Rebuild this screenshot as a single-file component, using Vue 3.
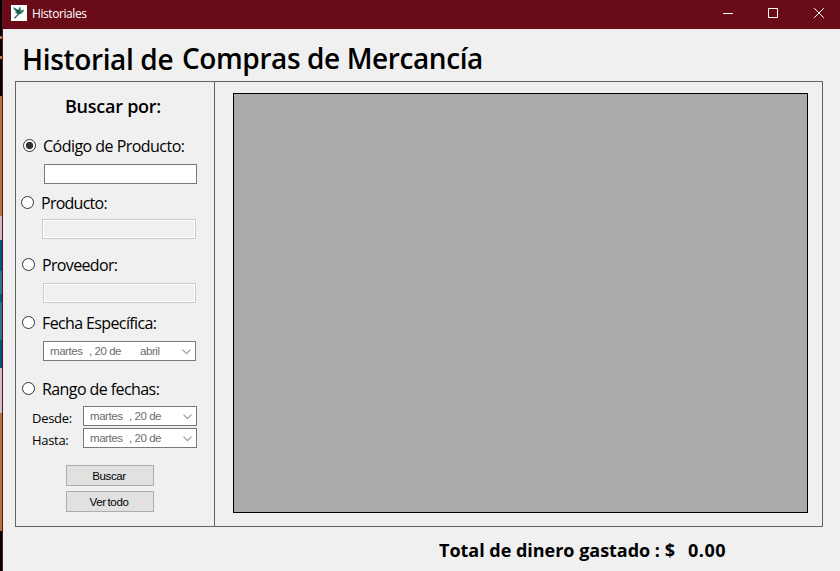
<script setup>
import { ref } from 'vue'

const mode = ref('codigo')
const code = ref('')
</script>

<template>
  <div class="screen">
    <div class="desktop">
      <i class="d-top"></i><i class="d-orange"></i><i class="d-grey"></i><i class="d-blue"></i><i class="d-teal"></i><i class="d-gap"></i><i class="d-teal2"></i><i class="d-blue2"></i><i class="d-grey2"></i><i class="d-orange2"></i>
    </div>
    <main class="window">
      <header class="titlebar">
        <svg class="app-icon" width="16" height="16" viewBox="0 0 16 16">
          <rect width="16" height="16" fill="#fff" />
          <path d="M2 2.2 4.2 3 7 5 8 3.6 8.8 1.2 9.6 3 9.6 5.4 13.4 4.6 11.8 7.4 9.6 9 7 9.8 6 8.6 3.4 7.8 5.6 7.2 3.2 4.4Z" fill="#23705f" />
          <path d="M5 4.4 8 6 8.8 8.6 6.4 7.6Z" fill="#134d45" />
          <path d="M9.4 7.4 12.8 5.4" stroke="#62a04a" fill="none" />
          <path d="M7.4 9.2 3.4 13.2" stroke="#2c6b4d" stroke-width="1.3" fill="none" />
        </svg>
        <span class="caption">Historiales</span>
        <div class="controls">
          <svg width="46" height="29" viewBox="0 0 46 29"><path d="M18 13.5h10" /></svg>
          <svg width="46" height="29" viewBox="0 0 46 29"><path d="M17.5 8.5h9v9h-9z" /></svg>
          <svg width="46" height="29" viewBox="0 0 46 29"><path d="m17.2 8.2 9.6 9.6m0-9.6-9.6 9.6" /></svg>
        </div>
      </header>

      <h1 class="title"><span class="t1">Historial de</span><span class="t2">Compras de Mercancía</span></h1>

      <section class="panel">
        <form class="sidebar" @submit.prevent>
          <h2><span>Buscar por:</span></h2>

          <label class="option o1"><input v-model="mode" type="radio" value="codigo"><span class="l1">Código de Producto:</span></label>
          <input v-model="code" class="box b1" type="text">

          <label class="option o2"><input v-model="mode" type="radio" value="producto"><span class="l2">Producto:</span></label>
          <input class="box b2" type="text" disabled>

          <label class="option o3"><input v-model="mode" type="radio" value="proveedor"><span class="l3">Proveedor:</span></label>
          <input class="box b3" type="text" disabled>

          <label class="option o4"><input v-model="mode" type="radio" value="fecha"><span class="l4">Fecha Específica:</span></label>
          <div class="date single">
            <span class="day">martes</span><span class="num">, 20 de</span><span class="month">abril</span>
            <svg width="9" height="6" viewBox="0 0 9 6"><path d="m.5.7 4 4 4-4" /></svg>
          </div>

          <label class="option o5"><input v-model="mode" type="radio" value="rango"><span class="l5">Rango de fechas:</span></label>
          <div class="range">
            <span class="from">Desde:</span>
            <div class="date">
              <span class="day">martes</span><span class="num">, 20 de</span>
              <svg width="9" height="6" viewBox="0 0 9 6"><path d="m.5.7 4 4 4-4" /></svg>
            </div>
          </div>
          <div class="range">
            <span class="to">Hasta:</span>
            <div class="date">
              <span class="day">martes</span><span class="num">, 20 de</span>
              <svg width="9" height="6" viewBox="0 0 9 6"><path d="m.5.7 4 4 4-4" /></svg>
            </div>
          </div>

          <div class="actions">
            <button type="submit"><span class="search">Buscar</span></button>
            <button type="button"><span class="all">Ver todo</span></button>
          </div>
        </form>
        <div class="results"><div class="grid"></div></div>
      </section>

      <footer class="total"><span class="sum">Total de dinero gastado : $</span><span class="amount">0.00</span></footer>
    </main>
  </div>
</template>

<style>
body { margin: 0; overflow: hidden; }
</style>

<style scoped>
* { box-sizing: border-box; }
.screen { display: flex; width: 840px; height: 571px; overflow: hidden; font-family: "Open Sans", "Noto Sans", sans-serif; color: #000; }
.screen span { white-space: pre; }
.desktop { display: flex; flex-direction: column; width: 2px; background: #000; }
.desktop i { display: block; flex: none; }
.d-top { height: 96px; background: linear-gradient(#000 36px, #b87748 36px 39px, #000 39px 56px, #b87748 56px 59px, #000 59px); }
.d-orange { height: 120px; background: #b27435; }
.d-grey { height: 24px; background: #c3c1c3; }
.d-blue { height: 31px; background: #00577b; }
.d-teal { height: 23px; background: #2d738b; }
.d-gap { height: 8px; background: #00577b; }
.d-teal2 { height: 38px; background: #2d738b; }
.d-blue2 { height: 28px; background: #005275; }
.d-grey2 { height: 45px; background: #c8c6c8; }
.d-orange2 { height: 118px; background: #b27435; }

.window { display: flex; flex-direction: column; width: 838px; height: 571px; background: #f0f0f0; border-left: 1px solid #6a0c19; }
.titlebar { display: flex; flex: none; height: 29px; background: #690c18; color: #fff; }
.app-icon { margin: 5px 0 0 8px; }
.caption { margin-left: 5px; font-size: 12px; line-height: 28px; letter-spacing: -0.42px; }
.controls { display: flex; margin-left: auto; margin-right: -3px; }
.controls svg { fill: none; stroke: #fff; stroke-width: 1; }

.title { display: flex; flex: none; margin: 0; height: 52px; padding-left: 19px; font-size: 28px; line-height: 60px; font-weight: 600; }
.t1 { width: 160px; letter-spacing: -0.35px; }
.t2 { letter-spacing: -0.4px; line-height: 59px; }

.panel { display: flex; flex: none; width: 808px; height: 446px; margin-left: 12px; border: 1px solid #646464; }
.sidebar { display: flex; flex-direction: column; width: 199px; border-right: 1px solid #646464; }
h2 { flex: none; margin: 0; height: 57px; padding-left: 49px; font-size: 18px; line-height: 49px; font-weight: 600; letter-spacing: -0.25px; }

.option { display: flex; flex: none; height: 13px; font-size: 16px; line-height: 15px; letter-spacing: -0.53px; }
.option input { flex: none; appearance: none; width: 13px; height: 13px; margin: 0 7px 0 0; border: 1px solid #333; border-radius: 50%; background: #fff; }
.option input:checked { background: radial-gradient(circle, #333 3.3px, #fff 4.1px); }
.l2 { letter-spacing: -0.75px; }
.l3 { letter-spacing: -0.65px; }
.l4 { letter-spacing: -0.62px; }
.l5 { letter-spacing: -0.58px; }
.o1 { margin-left: 7px; }
.o2 { margin: 12px 0 0 5px; }
.o3 { margin: 19px 0 0 6px; }
.o4 { margin: 13px 0 0 6px; }
.o5 { margin: 21px 0 11px 6px; }

.box { flex: none; width: 153px; height: 20px; margin: 12px 0 0 28px; padding: 0 3px; border: 1px solid #7a7a7a; border-radius: 0; background: #fff; outline: none; font: inherit; font-size: 12px; }
.box:disabled { border-color: #ccc; background: #f0f0f0; box-shadow: inset 0 0 0 1px #fff; }
.b2 { width: 154px; margin: 10px 0 0 26px; }
.b3 { margin-left: 27px; }

.date { display: flex; flex: none; width: 114px; height: 20px; padding: 0 4px 0 6px; border: 1px solid #7a7a7a; background: #fff; color: #6d6d6d; font-family: "Liberation Sans", Arial, sans-serif; font-size: 11.5px; line-height: 18px; letter-spacing: -0.45px; }
.single { width: 153px; margin: 12px 0 0 27px; }
.date svg { margin: 7px 0 0 auto; fill: none; stroke: #999; stroke-width: 1.1; }
.day { width: 39px; }
.num { width: 51px; }
.date:not(.single) .num { width: 40px; }
.range { display: flex; flex: none; height: 22px; padding-left: 16px; font-size: 13px; line-height: 24px; letter-spacing: -0.3px; }
.range > span { width: 51px; }

.actions { display: flex; flex-direction: column; gap: 5px; margin: 15px 0 0 50px; }
button { width: 88px; height: 21px; padding: 0 2px 0 0; border: 1px solid #adadad; border-radius: 0; background: #e1e1e1; color: #000; font-family: "Liberation Sans", Arial, sans-serif; font-size: 11.5px; line-height: 20px; letter-spacing: -0.35px; }
.search { letter-spacing: -0.4px; }
.all { word-spacing: -1px; }
.results { padding: 11px 0 0 18px; }
.grid { width: 575px; height: 420px; border: 1px solid #000; background: #ababab; }

.total { display: flex; padding-left: 436px; font-size: 18px; line-height: 47px; font-weight: 700; letter-spacing: -0.02px; }
.sum { width: 249px; }
.amount { letter-spacing: 0.55px; }
</style>
